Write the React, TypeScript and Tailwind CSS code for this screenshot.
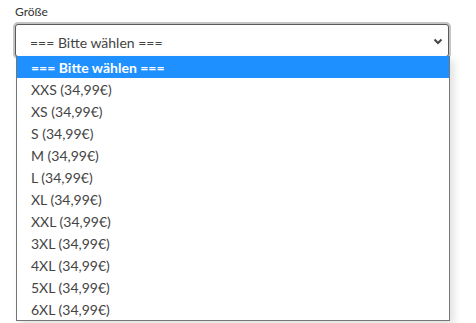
import React from 'react';

const sizes = ['XXS', 'XS', 'S', 'M', 'L', 'XL', 'XXL', '3XL', '4XL', '5XL', '6XL'];

export default function App() {
  return (
    <div className="w-[476px] h-[323px] overflow-hidden bg-white px-[15px] pt-[4px]" style={{ fontFamily: 'Lato, "Noto Sans", sans-serif' }}>
      <label className="block text-[12px] leading-[16px] text-[#333]">Größe</label>
      <div className="relative mt-[4px] w-[434px]">
        <div className="flex h-[33px] items-center justify-between rounded-[3px] border border-[#5a5a5a] bg-white pl-[14px] pr-[4px] pt-[4px] text-[14px] text-[#444] shadow-[0_0_0_2px_#c4c4c4]">
          <span>=== Bitte wählen ===</span>
          <svg width="12" height="12" viewBox="0 0 12 12" className="-mt-[4px] text-[#444]">
            <path d="M2.5 4.5 6 8l3.5-3.5" fill="none" stroke="currentColor" strokeWidth="2" />
          </svg>
        </div>
        <div className="absolute left-[1px] right-[-1px] top-[32px] z-10 border border-t-0 border-[#767676] bg-white shadow-[4px_4px_8px_rgba(0,0,0,0.12)]">
          <div className="h-[22px] bg-[#1e90ff] pl-[14px] pt-[2px] text-[14px] font-bold leading-[20px] text-white">=== Bitte wählen ===</div>
          {sizes.map(s => (
            <div key={s} className="h-[22px] pl-[14px] pt-[2px] text-[14px] leading-[20px] text-[#444]">
              {s} (34,99€)
            </div>
          ))}
        </div>
      </div>
    </div>
  );
}
